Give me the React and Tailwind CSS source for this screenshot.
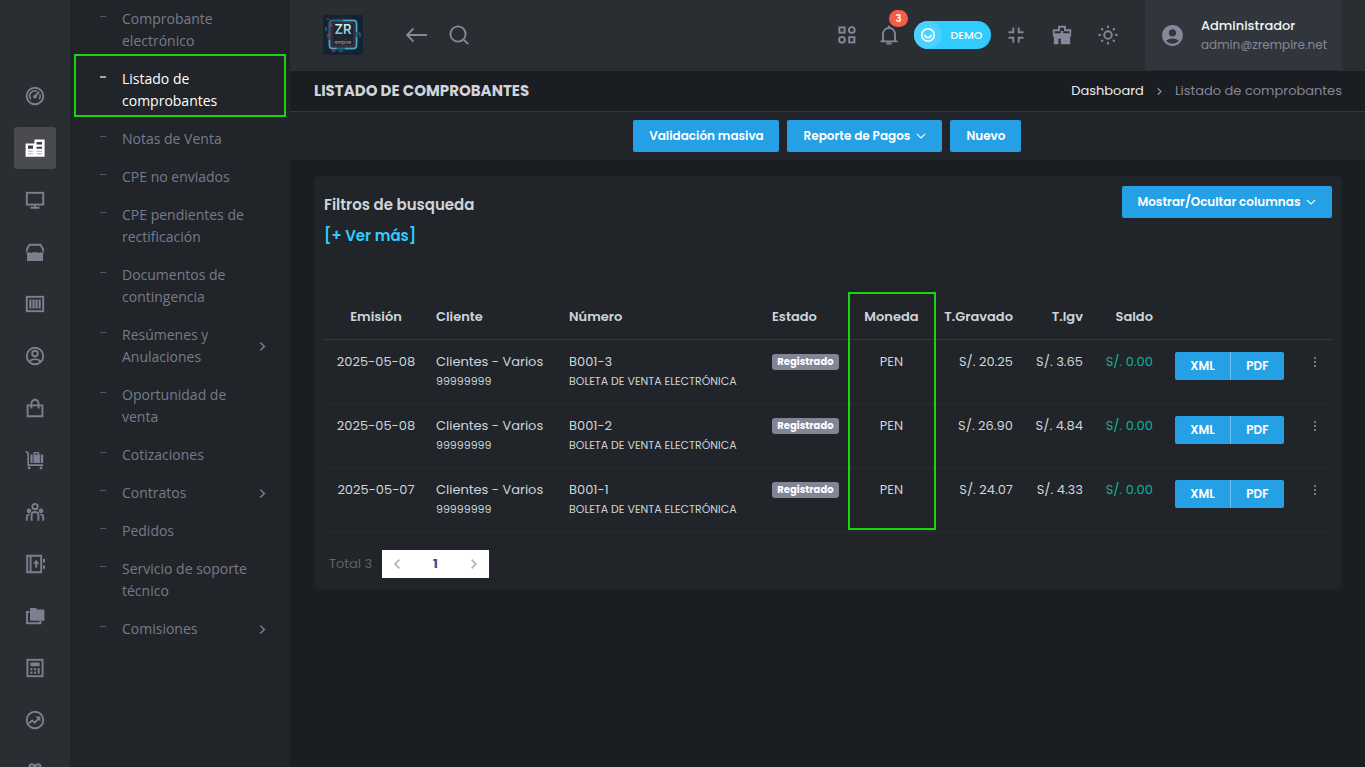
import { MdAccountCircle } from 'react-icons/md';

const Svg = ({ children, className = "size-5" }) => (
  <svg viewBox="0 0 20 20" className={className} fill="none" stroke="currentColor" strokeWidth="1.9" aria-hidden="true">
    {children}
  </svg>
);

const railItems = [
  {
    name: "Dashboard",
    icon: (
      <>
        <circle cx="10" cy="10" r="8.3" />
        <path d="M5.9 13.2A5.2 5.2 0 0 1 12 5.2M14.8 8.2a5.2 5.2 0 0 1-.7 5" strokeWidth="1.6" />
        <path d="M10 10.5l4.2-4.8" />
        <circle cx="10" cy="10.6" r="1.2" fill="currentColor" strokeWidth="1.4" />
      </>
    ),
  },
  {
    name: "Ventas",
    active: true,
    icon: (
      <>
        <path d="M.6 5.6h8.8V1.5h10.2v17.2H.6z" fill="currentColor" stroke="none" />
        <path d="M3 7.6h5v3.2H3zM11.6 4h5.4v2.6h-5.4zM11.6 8.8h5.4v2h-5.4z" fill="#3a3c41" stroke="none" />
        <path d="M3 13.2h5M3 15.8h5M11.6 13.2H17M11.6 15.8H17" stroke="#a9aaad" strokeWidth="1" />
      </>
    ),
  },
  {
    name: "POS",
    icon: (
      <>
        <rect x="1.8" y="2.8" width="16.4" height="11.8" />
        <path d="M10 15v3M5.5 17.8h9" />
      </>
    ),
  },
  {
    name: "Tienda",
    icon: (
      <>
        <path d="M2 9.5V7l2.6-4.2h10.8L18 7v2.5" />
        <path d="M1 8.4c.6 2.3 2.8 2.6 3.8 1.6 1 1.2 2.6 1.2 3.4-.2.8 1 2.8 1 3.6 0 .8 1.4 2.4 1.4 3.4.2 1 1 3.2.7 3.8-1.6l-1 4v6.6H2v-6.6z" fill="currentColor" stroke="none" />
      </>
    ),
  },
  {
    name: "Productos",
    icon: (
      <>
        <rect x="1.8" y="2.8" width="16.4" height="14.4" />
        <path d="M5.4 5.6v8.8M8.5 5.6v8.8M11.5 5.6v8.8M14.6 5.6v8.8" strokeWidth="2.2" />
      </>
    ),
  },
  {
    name: "Clientes",
    icon: (
      <>
        <circle cx="10" cy="10" r="8.2" />
        <circle cx="10" cy="7.5" r="2.8" />
        <path d="M4.4 15.4c2.4-3 8.8-3 11.2 0" />
      </>
    ),
  },
  {
    name: "Compras",
    icon: (
      <>
        <path d="M2.6 7.4h14.8v10.8H2.6z" />
        <path d="M6.4 10.5V5.4a3.6 3.6 0 0 1 7.2 0v5.1" />
      </>
    ),
  },
  {
    name: "Inventario",
    icon: (
      <>
        <path d="M.6 1.4l2.6 1.8v12h15" strokeWidth="1.7" />
        <path d="M5.4 4.6h3.2V2h5.6v2.6h4v8.4H5.4z" fill="currentColor" stroke="none" />
        <path d="M10 4.6V3.3h2.8v1.3z" fill="#292e32" stroke="none" />
        <path d="M8 4.6V13M15.4 4.6V13" stroke="#292e32" strokeWidth=".8" />
        <circle cx="4.2" cy="18" r="1.4" fill="currentColor" stroke="none" />
        <circle cx="16" cy="18" r="1.4" fill="currentColor" stroke="none" />
      </>
    ),
  },
  {
    name: "Usuarios",
    icon: (
      <>
        <circle cx="10" cy="4.6" r="2.7" />
        <circle cx="4" cy="8.8" r="1.4" />
        <circle cx="16" cy="8.8" r="1.4" />
        <path d="M6.6 18.8v-6c0-1.6 1.4-2.8 3.4-2.8s3.4 1.2 3.4 2.8v6M1.8 18.8V15c0-1.6 1-2.4 2.8-2.4M18.2 18.8V15c0-1.6-1-2.4-2.8-2.4" />
      </>
    ),
  },
  {
    name: "Guías",
    icon: (
      <>
        <path d="M2.2 1.8h14v16.4h-14zM5.6 1.8v16.4" />
        <path d="M19 5v3.4M19 11.4v3.4M11.2 13.6V9" strokeWidth="2" />
        <path d="M11.2 5.8l3.2 4H8z" fill="currentColor" stroke="none" />
      </>
    ),
  },
  {
    name: "Reportes",
    icon: (
      <>
        <path d="M5 2h6l1.6 1.6h6.8v11.2H5z" fill="currentColor" stroke="none" />
        <path d="M4.4 6H2v11.2h13.4V15" />
      </>
    ),
  },
  {
    name: "Contabilidad",
    icon: (
      <>
        <rect x="2.4" y="1.8" width="15.2" height="16.4" />
        <path d="M5.4 4.4h9.2v3.8H5.4zM5.4 10h2v2.2h-2zM9 10h2v2.2H9zM5.4 13.6h2v2.2h-2zM9 13.6h2v2.2H9zM12.6 10h2v5.8h-2z" fill="currentColor" stroke="none" />
      </>
    ),
  },
  {
    name: "Finanzas",
    icon: (
      <>
        <circle cx="10" cy="10" r="8.3" />
        <path d="M3.8 13.2l3.4-2.8 2.4 2.2 3.8-3.8" />
        <path d="M10.4 6.6h5v5z" fill="currentColor" stroke="none" />
      </>
    ),
  },
  {
    name: "Suscripciones",
    icon: <path d="M10 4.4C8.6 1.4 4.6 1.6 4.6 4.6V12M10 4.4c1.4-3 5.4-2.8 5.4.2V12M4 5.5h12" strokeWidth="2.2" />,
  },
];

const menuItems = [
  { name: "Comprobante electrónico" },
  { name: "Listado de comprobantes", active: true },
  { name: "Notas de Venta" },
  { name: "CPE no enviados" },
  { name: "CPE pendientes de rectificación" },
  { name: "Documentos de contingencia" },
  { name: "Resúmenes y Anulaciones", sub: true },
  { name: "Oportunidad de venta" },
  { name: "Cotizaciones" },
  { name: "Contratos", sub: true },
  { name: "Pedidos" },
  { name: "Servicio de soporte técnico" },
  { name: "Comisiones", sub: true },
];

const documents = [
  { date: "2025-05-08", number: "B001-3", taxed: "20.25", igv: "3.65" },
  { date: "2025-05-08", number: "B001-2", taxed: "26.90", igv: "4.84" },
  { date: "2025-05-07", number: "B001-1", taxed: "24.07", igv: "4.33" },
];

const Chevron = ({ className }) => (
  <svg viewBox="0 0 10 10" className={className} fill="none" stroke="currentColor" strokeWidth="1.5" aria-hidden="true">
    <path d="M3 1.4L6.6 5 3 8.6" />
  </svg>
);

const ArrowDown = () => (
  <svg viewBox="0 0 10 10" className="size-[10px]" fill="none" stroke="currentColor" strokeWidth="1.1" aria-hidden="true">
    <path d="M.8 2.8L5 7l4.2-4.2" />
  </svg>
);

const Rail = () => (
  <nav aria-label="Módulos" className="flex w-[70px] shrink-0 flex-col items-center gap-[10px] overflow-hidden bg-[#292e32] pt-[75px]">
    {railItems.map((item) => (
      <a
        key={item.name}
        href="#"
        aria-label={item.name}
        className={`flex size-[42px] shrink-0 items-center justify-center rounded-[3px] ${
          item.active ? "bg-[#494b50] text-white" : "text-[#7c7f90]"
        }`}
      >
        <Svg>{item.icon}</Svg>
      </a>
    ))}
  </nav>
);

const Submenu = () => (
  <nav aria-label="Ventas" className="w-[220px] shrink-0 overflow-hidden bg-[#212529] pt-2 font-['Open_Sans',sans-serif]">
    <ul className="flex flex-col gap-4 text-sm leading-[22px]">
      {menuItems.map((item) => (
        <li key={item.name} className="relative">
          <a href="#" className={`flex pr-[22px] pl-[30px] ${item.active ? "text-white" : "text-[#777a8c]"}`}>
            <span className={`mt-2 mr-4 w-[6px] shrink-0 self-start border-current opacity-60 ${item.active ? "border-t-2" : "border-t"}`} />
            <span className="w-[132px]">{item.name}</span>
            {item.sub && <Chevron className="ml-auto size-[11px] self-center" />}
          </a>
          {item.active && (
            <span className="pointer-events-none absolute inset-x-1 -top-[14px] -bottom-[5px] border-2 border-[#18d60e]" />
          )}
        </li>
      ))}
    </ul>
  </nav>
);

const Logo = () => (
  <svg viewBox="0 0 40 40" className="size-10" role="img" aria-label="ZR Empire">
    <defs>
      <radialGradient id="glow">
        <stop offset="0" stopColor="#26404c" />
        <stop offset="1" stopColor="#142231" />
      </radialGradient>
      <linearGradient id="zr" x1="0" y1="0" x2="0" y2="1">
        <stop offset="0" stopColor="#f2ffff" />
        <stop offset="1" stopColor="#55bfd2" />
      </linearGradient>
    </defs>
    <rect width="40" height="40" fill="url(#glow)" />
    <rect x="6.5" y="5.5" width="27" height="28" rx="3" fill="#182633" stroke="#236b80" strokeWidth="2" />
    <path d="M20 5.5h10.5q3 0 3 3V17M33.5 22v8q0 3.5-3 3.5H22M6.5 25v5q0 3.5 3 3.5h4" fill="none" stroke="#48a9c1" strokeWidth="1.4" />
    <rect x="9" y="8" width="22" height="23" rx="2" fill="#20242f" stroke="#684650" strokeWidth=".7" />
    <text x="20" y="19" textAnchor="middle" fontFamily="Inter, sans-serif" fontSize="13" fontWeight="600" fill="url(#zr)">ZR</text>
    <text x="20" y="29" textAnchor="middle" fontFamily="Inter, sans-serif" fontSize="5" fontWeight="500" fill="#c08c84">empire</text>
    <path d="M4 4h2M8 8v4M9 36h3M5 19v3" stroke="#b52d37" strokeWidth="1.6" />
    <path d="M3 12v4M35 18h2v4M16 36h4" stroke="#237d98" fill="none" />
  </svg>
);

const iconButton = "flex h-[42px] items-center justify-center";

const Header = () => (
  <header className="flex h-[71px] shrink-0 items-center bg-[#292e32] pr-[23px] pb-[2px] pl-[33px] text-[#85879a]">
    <a href="#"><Logo /></a>
    <button aria-label="Atrás" className={`ml-[33px] w-[42px] ${iconButton}`}>
      <Svg className="h-5 w-[22px]"><path d="M0 10h20M6.5 3.5L0 10l6.500 6.500" /></Svg>
    </button>
    <button aria-label="Buscar" className={`w-[42px] ${iconButton}`}>
      <Svg><circle cx="9" cy="9" r="7.6" /><path d="M14.4 14.4l4.8 4.8" /></Svg>
    </button>

    <div className="ml-auto flex items-center self-start">
      <button aria-label="Módulos" className={`w-[42px] ${iconButton}`}>
        <Svg>
          <rect x="2.4" y="2.4" width="5.2" height="5.2" />
          <circle cx="14.8" cy="5" r="2.9" />
          <circle cx="5" cy="14.8" r="2.9" />
          <rect x="12.2" y="12.2" width="5.2" height="5.2" />
        </Svg>
      </button>
      <button aria-label="Notificaciones" className={`relative w-[42px] ${iconButton}`}>
        <Svg>
          <path d="M1.5 16.4h17M4 16V9.5C4 5.6 6.6 3 10 3s6 2.600 6 6.500V16" />
          <path d="M10 .8V3M7.5 18.6h5" strokeWidth="2" />
        </Svg>
        <span className="absolute -top-[4px] left-[21px] flex h-[17px] w-[19px] items-center justify-center rounded-full bg-[#f25f46] text-[10px] font-semibold text-white">3</span>
      </button>
      <button className="mr-[2px] ml-1 flex h-7 w-[77px] items-center rounded-full bg-[#31ccff] text-[11px] font-medium text-white">
        <span className="flex size-7 items-center justify-center rounded-full bg-[#49d2ff]">
          <Svg className="size-4">
            <g strokeWidth="2"><circle cx="10" cy="10" r="7.8" /><path d="M6 9.5c.5 5 7.5 5 8 0" /></g>
          </Svg>
        </span>
        <span className="grow">DEMO</span>
      </button>
      <button aria-label="Pantalla completa" className={`w-[46px] ${iconButton}`}>
        <Svg><path d="M2.5 7.3h4.8V2.5M17.5 7.3h-4.8V2.5M2.5 12.7h4.8v4.8M17.5 12.7h-4.8v4.8" /></Svg>
      </button>
      <button aria-label="Caja" className={`w-[46px] ${iconButton}`}>
        <Svg>
          <path d="M1.7 8V5.2H7V1.8h6v3.4h5.3V8" />
          <path d="M.8 8.2h18.400v2.600l-1 1v7.400H8.800v-5.400H6.400v5.400H1.800v-7.400l-1-1zM8.800 6h2.400v3H8.800z" fill="currentColor" stroke="none" />
        </Svg>
      </button>
      <button aria-label="Tema claro" className={`w-[46px] ${iconButton}`}>
        <Svg>
          <circle cx="10" cy="10" r="3.8" />
          <path d="M10 .5v2.400M10 17.100v2.400M.5 10h2.400M17.100 10h2.400M3.300 3.300L5 5M15 15l1.700 1.700M3.300 16.700L5 15M15 5l1.700-1.700" />
        </Svg>
      </button>
      <button className="ml-[14px] flex h-[70px] w-[197px] items-center bg-[#31363c] pl-[15px] text-left">
        <MdAccountCircle className="size-[25px]" />
        <span className="ml-4 flex flex-col leading-[19px]">
          <span className="text-[13px] font-medium text-[#f0f2f4]">Administrador</span>
          <span className="text-xs leading-[19px]">admin@zrempire.net</span>
        </span>
      </button>
    </div>
  </header>
);

const blueButton = "flex h-8 items-center justify-center gap-[6px] rounded-[2px] bg-[#26a0e4] text-xs font-semibold text-white";

const DocumentsTable = () => (
  <table className="mt-10 w-full table-fixed text-[13px] leading-5 text-[#ced4da]">
    <colgroup>
      <col className="w-[104px]" />
      <col className="w-[133px]" />
      <col />
      <col className="w-[84px]" />
      <col className="w-[87px]" />
      <col className="w-[86px]" />
      <col className="w-[70px]" />
      <col className="w-[70px]" />
      <col className="w-[137px]" />
      <col className="w-[34px]" />
    </colgroup>
    <thead>
      <tr className="h-[47px] border-b border-[#32383e] text-left *:px-2 *:pt-1 *:font-semibold">
        <th className="text-center">Emisión</th>
        <th>Cliente</th>
        <th>Número</th>
        <th>Estado</th>
        <th className="relative text-center">
          Moneda
          <span className="pointer-events-none absolute top-0 left-0 h-[238px] w-[88px] border-2 border-[#18d60e]" />
        </th>
        <th className="text-right">T.Gravado</th>
        <th className="text-right">T.Igv</th>
        <th className="text-right">Saldo</th>
        <th></th>
        <th></th>
      </tr>
    </thead>
    <tbody>
      {documents.map((doc) => (
        <tr key={doc.number} className="h-16 border-b border-[#292d31] align-top *:px-2 *:pt-3">
          <td className="text-center">{doc.date}</td>
          <td>
            Clientes - Varios
            <div className="text-[11px] leading-[18px]">99999999</div>
          </td>
          <td>
            {doc.number}
            <div className="text-[11px] leading-[18px] whitespace-nowrap">BOLETA DE VENTA ELECTRÓNICA</div>
          </td>
          <td>
            <span className="mt-[2px] flex h-4 w-[67px] items-center justify-center rounded-[3px] bg-[#838597] text-[10px] font-bold text-white">
              Registrado
            </span>
          </td>
          <td className="text-center">PEN</td>
          <td className="text-right">S/. {doc.taxed}</td>
          <td className="text-right">S/. {doc.igv}</td>
          <td className="text-right text-[#0ab39c]">S/. 0.00</td>
          <td>
            <div className="flex h-7 justify-center text-xs font-semibold text-white">
              <button className="w-[55px] rounded-l-[2px] bg-[#26a0e4]">XML</button>
              <button className="w-[54px] rounded-r-[2px] border-l border-[#6fc0ed] bg-[#26a0e4]">PDF</button>
            </div>
          </td>
          <td>
            <button aria-label="Opciones" className="flex h-5 w-full items-center justify-center text-[#74767b]">
              <svg viewBox="0 0 2 10" className="h-[10px] w-[2px]" fill="currentColor" aria-hidden="true">
                <path d="M0 0h2v2H0zM0 4h2v2H0zM0 8h2v2H0z" />
              </svg>
            </button>
          </td>
        </tr>
      ))}
    </tbody>
  </table>
);

const App = () => (
  <div className="flex h-screen overflow-hidden bg-[#1a1d21] font-[Poppins,Inter,sans-serif]">
    <Rail />
    <Submenu />
    <div className="flex min-w-0 grow flex-col">
      <Header />

      <div className="flex h-[41px] shrink-0 items-center justify-between border-b border-[#32383e] px-6 pr-[23px]">
        <h1 className="text-[15px] font-bold text-[#ced4da]">LISTADO DE COMPROBANTES</h1>
        <nav aria-label="Ruta" className="flex items-center text-[13px] text-[#85879a]">
          <a href="#" className="text-[#e9ecef]">Dashboard</a>
          <Chevron className="mx-[11px] size-[9px]" />
          <span>Listado de comprobantes</span>
        </nav>
      </div>

      <div className="flex h-12 shrink-0 items-center justify-center gap-2 bg-[#212529]">
        <button className={`w-[146px] ${blueButton}`}>Validación masiva</button>
        <button className={`w-[155px] ${blueButton}`}>Reporte de Pagos <ArrowDown /></button>
        <button className={`w-[71px] ${blueButton}`}>Nuevo</button>
      </div>

      <main className="mt-4 mr-[23px] ml-6 rounded-[5px] bg-[#212529] px-[10px] pt-[10px] pb-3">
        <div className="flex items-start justify-between">
          <div className="pt-1 text-[15px] font-semibold">
            <h2 className="leading-[30px] text-[#ced4da]">Filtros de busqueda</h2>
            <button className="leading-8 text-[#31ccff]">[+ Ver más]</button>
          </div>
          <button className={`w-[210px] ${blueButton}`}>Mostrar/Ocultar columnas <ArrowDown /></button>
        </div>
        <DocumentsTable />
        <div className="mt-[18px] flex items-center pl-[5px] text-[13px]">
          <span className="w-[53px] text-[#606266]">Total 3</span>
          <div className="flex h-7 items-center bg-white text-[#b4b8c0]">
            <button aria-label="Anterior" className="flex w-[30px] justify-center"><Chevron className="size-3 rotate-180" /></button>
            <button className="w-[47px] font-bold text-[#405189]">1</button>
            <button aria-label="Siguiente" className="flex w-[30px] justify-center"><Chevron className="size-3" /></button>
          </div>
        </div>
      </main>
    </div>
  </div>
);

export default App;
